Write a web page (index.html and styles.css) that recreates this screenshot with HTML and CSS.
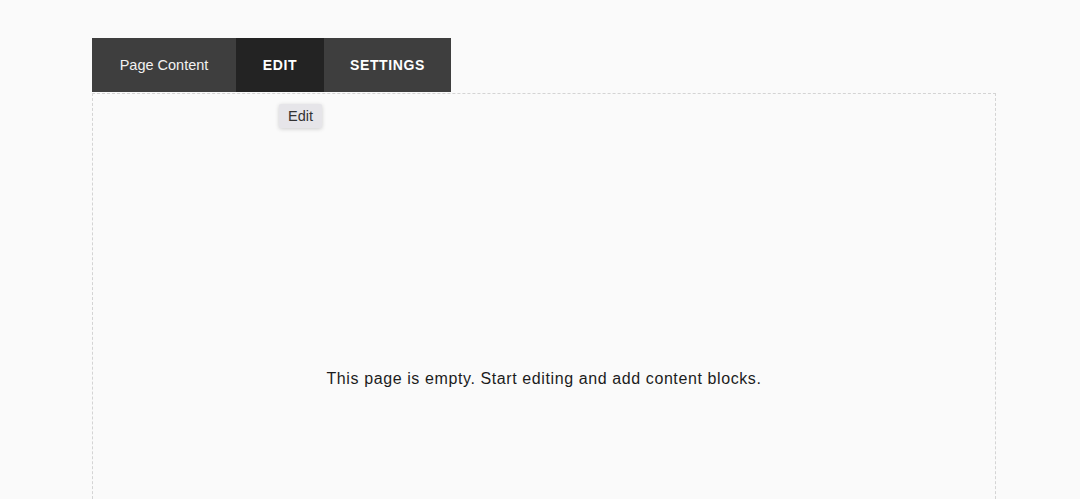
FILE: index.html
```html
<!DOCTYPE html>
<html lang="en">
<head>
    <meta charset="UTF-8">
    <title>Page Content</title>
    <link rel="stylesheet" href="styles.css">
</head>
<body>
    <div class="editor">
        <div class="tabs">
            <div class="tab">Page Content</div>
            <div class="tab tab-caps active">EDIT</div>
            <div class="tab tab-caps tab-settings">SETTINGS</div>
            <div class="tooltip">Edit</div>
        </div>
        <div class="canvas">
            <p class="empty">This page is empty. Start editing and add content blocks.</p>
        </div>
    </div>
</body>
</html>
```

FILE: styles.css
```css
html, body {
    margin: 0;
    padding: 0;
    background: #fafafa;
    font-family: "Liberation Sans", Arial, sans-serif;
    overflow: hidden;
}
.editor {
    margin: 38px 0 0 92px;
    width: 904px;
}
.tabs {
    position: relative;
    display: flex;
    height: 54px;
}
.tab {
    display: flex;
    align-items: center;
    justify-content: center;
    background: #3e3e3e;
    color: #f2f2f2;
    font-size: 14.5px;
    width: 144px;
}
.tab-caps {
    font-weight: bold;
    font-size: 14px;
    letter-spacing: 0.6px;
    color: #ffffff;
}
.active {
    background: #232323;
    width: 88px;
}
.tab-settings {
    width: 127px;
}
.tooltip {
    position: absolute;
    left: 187px;
    top: 66px;
    height: 24px;
    padding: 0 9px;
    display: flex;
    align-items: center;
    background: #e6e5e9;
    color: #333;
    font-size: 14.5px;
    border-radius: 2px;
    box-shadow: 0 1px 4px rgba(0, 0, 0, 0.18);
}
.canvas {
    height: 420px;
    border: 1px dashed #d4d4d4;
    border-bottom: none;
    margin-top: 1px;
    display: flex;
    justify-content: center;
}
.empty {
    margin: 276px 0 0;
    font-size: 16px;
    letter-spacing: 0.6px;
    color: #1c1c1c;
}
```
